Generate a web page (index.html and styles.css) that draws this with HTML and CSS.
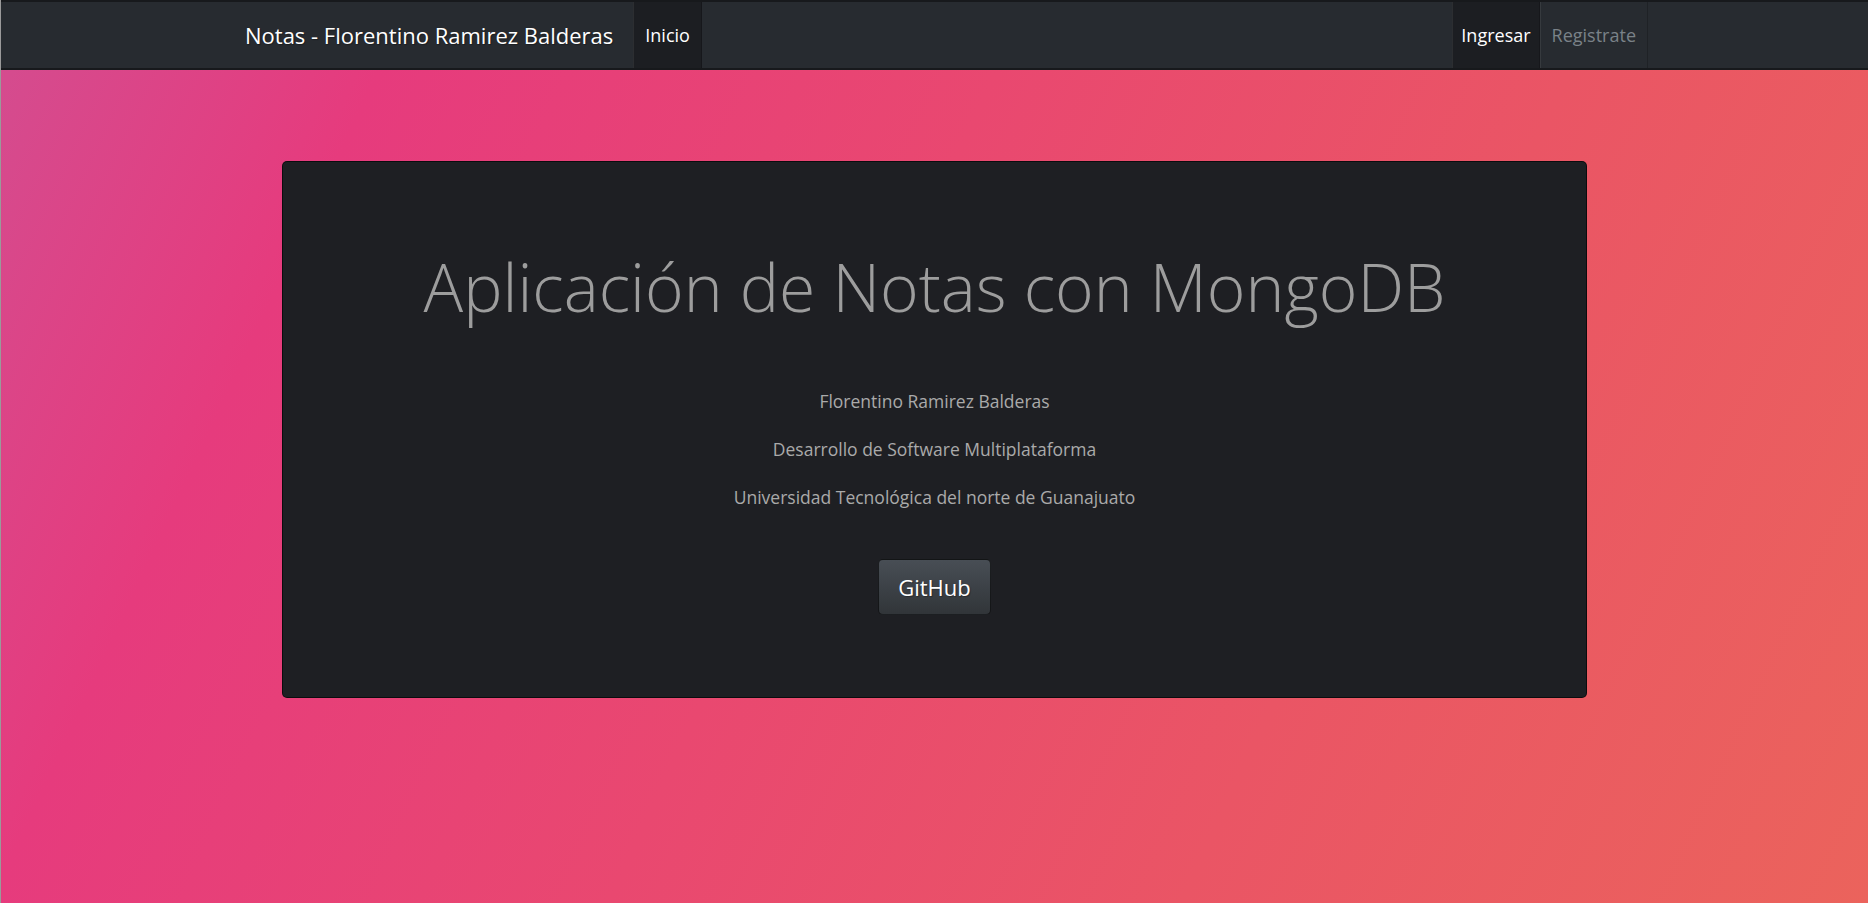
FILE: index.html
```html
<!DOCTYPE html>
<html lang="es">
<head>
<meta charset="utf-8">
<title>Notas - Florentino Ramirez Balderas</title>
<link rel="stylesheet" href="styles.css">
</head>
<body>
<nav class="navbar">
  <div class="navbar-inner">
    <a class="brand" href="#">Notas - Florentino Ramirez Balderas</a>
    <ul class="nav">
      <li><a class="nav-link active" href="#">Inicio</a></li>
    </ul>
    <ul class="nav nav-right">
      <li><a class="nav-link active" href="#">Ingresar</a></li>
      <li><a class="nav-link muted" href="#">Registrate</a></li>
    </ul>
  </div>
</nav>
<main class="main">
  <section class="card">
    <h1 class="title">Aplicación de Notas con MongoDB</h1>
    <p class="line">Florentino Ramirez Balderas</p>
    <p class="line">Desarrollo de Software Multiplataforma</p>
    <p class="line">Universidad Tecnológica del norte de Guanajuato</p>
    <a class="btn" href="#">GitHub</a>
  </section>
</main>
</body>
</html>
```

FILE: styles.css
```css
* { box-sizing: border-box; }
html, body { height: 100%; }
body {
  margin: 0;
  border-left: 1px solid #9a9a9a;
  font-family: "Open Sans", "Noto Sans", sans-serif;
  color: #aaaaaa;
  background: linear-gradient(115deg, #d34d90 0%, #e63b7d 18%, #e94870 45%, #ea5565 70%, #eb635c 100%);
  min-height: 903px;
}
a { text-decoration: none; }

.navbar {
  background: #272b30;
  border-top: 2px solid #17191c;
  border-bottom: 2px solid #17191c;
  height: 70px;
}
.navbar-inner {
  display: flex;
  align-items: stretch;
  height: 66px;
  padding: 0 220px 0 244px;
}
.brand {
  display: flex;
  align-items: center;
  color: #ffffff;
  font-size: 22px;
  margin-right: 20px;
  text-shadow: 1px 1px 1px rgba(0,0,0,.3);
}
.nav {
  display: flex;
  list-style: none;
  margin: 0;
  padding: 0;
}
.nav li { display: flex; }
.nav-right { margin-left: auto; }
.nav-link {
  display: flex;
  align-items: center;
  padding: 0 11px;
  font-size: 18px;
  color: #ffffff;
  border-left: 1px solid rgba(255,255,255,.07);
  border-right: 1px solid rgba(0,0,0,.2);
}
.nav-right .nav-link { padding: 0 8px; }
.nav-right .nav-link.muted { padding: 0 11px; }
.nav-link.active { background: #1c1e22; }
.nav-link.muted { color: #7a8288; }

.main { padding-top: 91px; }
.card {
  width: 1305px;
  height: 537px;
  margin: 0 auto;
  background: #1e1f23;
  border: 1px solid rgba(0,0,0,.6);
  border-radius: 5px;
  text-align: center;
  padding-top: 84px;
}
.title {
  margin: 0 0 60px;
  font-weight: 300;
  font-size: 66px;
  line-height: 80px;
  color: #9d9d9d;
}
.line {
  margin: 0 0 18px;
  font-size: 17.5px;
  line-height: 30px;
}
.btn {
  display: inline-block;
  margin-top: 29px;
  width: 113px;
  height: 56px;
  line-height: 54px;
  font-size: 22px;
  color: #ffffff;
  background: linear-gradient(#484e55, #3a3f44 60%, #313539);
  border: 1px solid rgba(0,0,0,.6);
  border-radius: 5px;
  text-shadow: 1px 1px 1px rgba(0,0,0,.3);
}
```
